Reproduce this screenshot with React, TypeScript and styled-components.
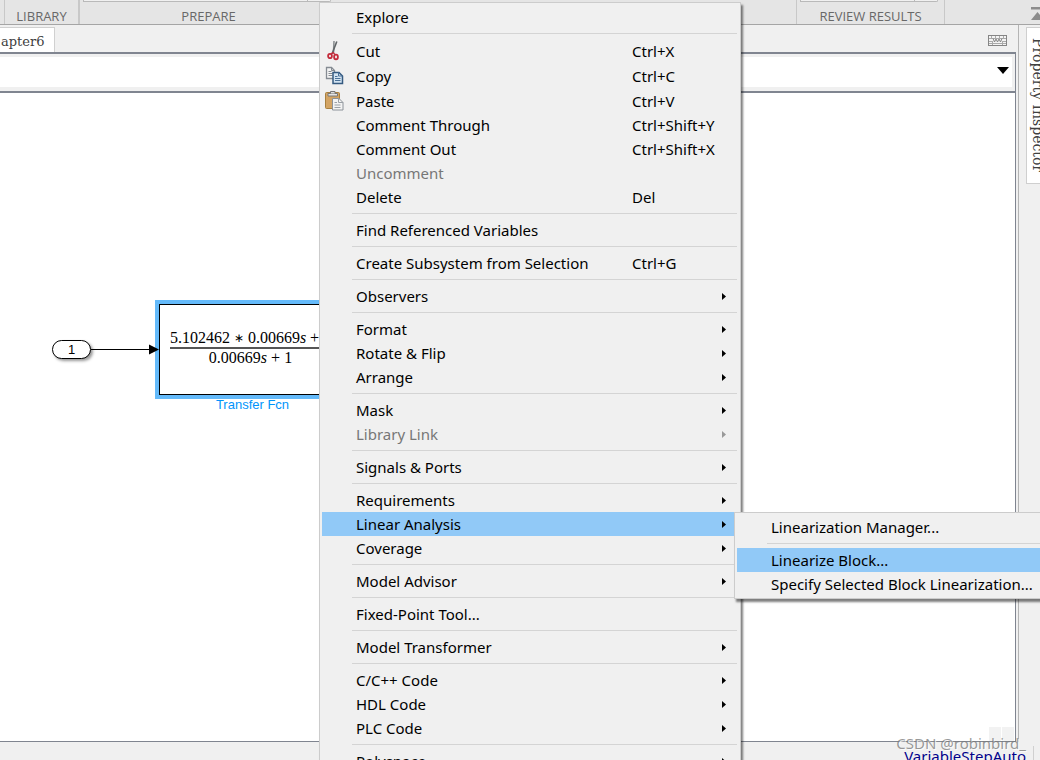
import React from 'react';
import styled, { createGlobalStyle } from 'styled-components';

const GlobalStyle = createGlobalStyle`
  *, *::before, *::after { box-sizing: border-box; }
  body {
    margin: 0;
    background: #f0f0f0;
    font-family: "Noto Sans", "Open Sans", sans-serif;
    font-size: 15px;
    color: #000;
  }
  button, select { font: inherit; color: inherit; margin: 0; }
`;

const Shell = styled.div`
  position: relative;
  display: flex;
  flex-direction: column;
  height: 100vh;
  overflow: hidden;
`;

/* Ribbon */

const Ribbon = styled.header`
  display: flex;
  flex: none;
  height: 25px;
  padding-left: 4px;
  background: #e5e5e5;
  border-bottom: 1px solid #a5a5a5;
`;

const RibbonSection = styled.section<{ $width: number; $push?: boolean; $edge?: number }>`
  display: flex;
  flex-direction: column;
  justify-content: space-between;
  align-items: center;
  width: ${(p) => p.$width}px;
  margin-left: ${(p) => (p.$push ? 'auto' : '0')};
  border-left: ${(p) => p.$edge ?? 1}px solid #c8c8c8;
`;

const GalleryEdge = styled.div`
  display: flex;
  justify-content: flex-end;
  align-self: stretch;
  height: 2px;
  margin: 0 6px 0 3px;
  background: #f0f0f0;
  border: 1px solid #b9b9b9;
  border-top: 0;
  border-radius: 0 0 3px 0;
  &::after {
    content: '';
    width: 23px;
    border-left: 1px solid #b9b9b9;
  }
`;

const RibbonTitle = styled.h2`
  margin: auto 0 0;
  font: 400 13px/16px "Open Sans", "Noto Sans", sans-serif;
  color: #686868;
`;

const RibbonEnd = styled.div`
  display: flex;
  justify-content: flex-end;
  align-items: flex-end;
  width: 96px;
  padding-bottom: 4px;
  border-left: 1px solid #c8c8c8;
`;

const IconButton = styled.button`
  display: flex;
  padding: 0;
  border: 0;
  background: none;
`;

/* Workspace */

const Workspace = styled.div`
  display: flex;
  flex: 1;
  min-height: 0;
`;

const Editor = styled.main`
  display: flex;
  flex-direction: column;
  flex: 1;
  min-width: 0;
`;

const TabRow = styled.div`
  display: flex;
  flex: none;
  justify-content: space-between;
  align-items: flex-end;
  height: 27px;
  margin-right: 2px;
  padding-right: 9px;
`;

const FileTab = styled.button`
  height: 25px;
  padding: 4px 10px 0 1px;
  border: 1px solid #d0d0d0;
  border-width: 1px 1px 0 0;
  background: #fff;
  font: 13px/20px "DejaVu Serif", serif;
  color: #404040;
`;

const KeyboardSlot = styled.div`
  display: flex;
  padding-bottom: 6px;
`;

const PathBar = styled.div`
  position: relative;
  flex: none;
  height: 39px;
  margin-right: 2px;
  padding: 1px 1px 1px 0;
  border: solid #808590;
  border-width: 2px 1px 0 0;
`;

const PathSelect = styled.select`
  display: block;
  appearance: none;
  width: 100%;
  height: 100%;
  border: 2px solid #f0f0f0;
  border-width: 2px 2px 3px 0;
  border-radius: 0;
  background: #fff;
`;

const SelectArrow = styled.svg`
  position: absolute;
  right: 6px;
  top: 13px;
  pointer-events: none;
`;

const Canvas = styled.div`
  position: relative;
  flex: 1;
  margin-right: 2px;
  overflow: hidden;
  background: #fff;
  border: solid #808590;
  border-width: 2px 1px 1px 0;
`;

const ScrollCorner = styled.div`
  position: absolute;
  right: 1px;
  bottom: 0;
  display: flex;
  gap: 1px;
  &::before, &::after {
    content: '';
    width: 12px;
    height: 14px;
    background: #f2f2f2;
  }
`;

const StatusBar = styled.footer`
  display: flex;
  justify-content: flex-end;
  align-items: flex-start;
  flex: none;
  gap: 7px;
  height: 18px;
  padding: 4px 6px 0 0;
  overflow: hidden;
  &::after {
    content: '';
    height: 14px;
    border-left: 1px solid #d0d0d0;
  }
`;

const SolverLink = styled.a`
  line-height: 20px;
  color: #00008b;
  text-decoration: none;
`;

const SideRail = styled.aside`
  flex: none;
  width: 22px;
  padding: 2px 0 0 7px;
  overflow: hidden;
  border-left: 1px solid #b4b4b4;
`;

const RailTab = styled.button`
  width: 28px;
  height: 157px;
  padding: 0 4px 0 0;
  border: 1px solid #cfcfcf;
  background: #fff;
  writing-mode: vertical-rl;
  font: 14px/22px "DejaVu Serif", serif;
  color: #404040;
`;

/* Diagram */

const InPort = styled.div`
  position: absolute;
  left: 52px;
  top: 247px;
  width: 39px;
  height: 19px;
  border: 1px solid #000;
  border-radius: 10px;
  background: #fff;
  box-shadow: 2px 2px 3px #999;
  font: 13px/17px "Liberation Sans", sans-serif;
  text-align: center;
`;

const Signal = styled.svg`
  position: absolute;
  left: 91px;
  top: 250px;
`;

const Block = styled.div`
  position: absolute;
  left: 155px;
  top: 207px;
  width: 195px;
  border: 4px solid #64bafa;
`;

const BlockBody = styled.div`
  display: flex;
  flex-direction: column;
  align-items: flex-start;
  height: 91px;
  padding: 24px 0 0 10px;
  border: 1px solid #000;
`;

const BlockName = styled.div`
  position: absolute;
  left: 155px;
  top: 304px;
  width: 195px;
  font: 13px/16px "Liberation Sans", sans-serif;
  color: #0094fb;
  text-align: center;
`;

const FractionRow = styled.div<{ $ruled?: boolean }>`
  display: flex;
  justify-content: center;
  gap: 4px;
  width: 161px;
  height: 20px;
  border-bottom: ${(p) => (p.$ruled ? '2px solid #555' : '0')};
  font: 16px/18px "Liberation Serif", serif;
  white-space: nowrap;
`;

const Times = styled.span`
  font-size: 12px;
`;

/* Context menu */

const MenuPanel = styled.div<{ $sub?: boolean }>`
  position: absolute;
  z-index: 2;
  left: ${(p) => (p.$sub ? '412px' : '319px')};
  top: ${(p) => (p.$sub ? '0' : '2px')};
  width: 422px;
  padding: 2px;
  background: #f0f0f0;
  border: 1px solid #cccccc;
  box-shadow: 2px 3px 2px rgba(0, 0, 0, 0.5);
`;

const MenuRow = styled.div`
  position: relative;
`;

const MenuItem = styled.button<{ $active?: boolean; $tall?: boolean }>`
  display: grid;
  grid-template-columns: 31px 276px 1fr 4px;
  align-items: center;
  width: 100%;
  height: ${(p) => (p.$tall ? 25 : 24)}px;
  padding: 0 12px 0 3px;
  border: 0;
  background: ${(p) => (p.$active ? '#91c9f7' : 'transparent')};
  line-height: 24px;
  text-align: left;
  white-space: nowrap;
  &:disabled { color: #777; }
`;

const ItemIcon = styled.span`
  display: flex;
`;

const Divider = styled.hr`
  height: 1px;
  margin: 4px 1px 4px 30px;
  border: 0;
  background: #d4d4d4;
`;

const Watermark = styled.div`
  position: absolute;
  z-index: 3;
  right: 14px;
  bottom: 8px;
  font: 15px/18px "Noto Sans", sans-serif;
  color: rgba(120, 120, 120, 0.75);
  text-shadow: 1px 1px 0 rgba(255, 255, 255, 0.8);
`;

const CutIcon = () => (
  <svg width="19" height="21" viewBox="0 0 19 21" fill="none" aria-hidden="true">
    <path d="M9 1 8.500 13" stroke="#8b8f92" strokeWidth="1.600" />
    <path d="M11.800 1.500 7 14" stroke="#5f6467" strokeWidth="1.600" />
    <ellipse cx="5" cy="16" rx="1.900" ry="2.200" stroke="#c42a3a" strokeWidth="1.800" />
    <ellipse cx="11" cy="17" rx="1.900" ry="2.300" stroke="#c42a3a" strokeWidth="1.800" />
    <path d="M6 14 8 12.500 10 14.500" stroke="#c42a3a" strokeWidth="1.300" />
  </svg>
);

const CopyIcon = () => (
  <svg width="19" height="19" viewBox="0 0 19 19" aria-hidden="true">
    <path d="M1.500 1.500h5l3 3v8h-8z" fill="#f4f4f4" stroke="#858b92" strokeWidth="1.300" />
    <path d="M6.500 1.500v3h3M3.500 5.500h3M3.500 7.500h4M3.500 9.500h4" fill="none" stroke="#858b92" />
    <path d="M8 6.500h6l3.500 3.500v7.500H8z" fill="#d3e4f2" stroke="#355a80" strokeWidth="1.500" />
    <path d="M13.500 6.500V10h4M10 10.500h2.500M10 12.500h5.500M10 14.500h5.500" fill="none" stroke="#4a7198" />
  </svg>
);

const PasteIcon = () => (
  <svg width="19" height="21" viewBox="0 0 19 21" aria-hidden="true">
    <rect x="0.500" y="2.500" width="14" height="16" rx="1" fill="#d3a464" stroke="#a8803f" />
    <path d="M3 3.500h9.500v2.500H3z" fill="#e4e4e4" stroke="#777" />
    <path d="M5.500 3.500v-2h4.500v2" fill="#ddd" stroke="#777" />
    <path d="M7.500 8.500h6.500l4 4v7.500H7.500z" fill="#f3f3f3" stroke="#8c9299" />
    <path d="M13.500 8.500v4H18M9.500 12.500H12M9.500 15h6M9.500 17.500h6" fill="none" stroke="#9aa0a6" />
  </svg>
);

const SubArrow = ({ dim }: { dim?: boolean }) => (
  <svg width="4" height="7" viewBox="0 0 4 7" aria-hidden="true">
    <path d="M0 0 4 3.500 0 7z" fill={dim ? '#999' : '#000'} />
  </svg>
);

type Entry = {
  label: string;
  keys?: string;
  icon?: React.ReactNode;
  more?: boolean;
  off?: boolean;
  active?: boolean;
  children?: Entry[][];
};

const subGroups: Entry[][] = [
  [{ label: 'Linearization Manager...' }],
  [{ label: 'Linearize Block...', active: true }, { label: 'Specify Selected Block Linearization...' }],
];

const groups: Entry[][] = [
  [{ label: 'Explore' }],
  [
    { label: 'Cut', keys: 'Ctrl+X', icon: <CutIcon /> },
    { label: 'Copy', keys: 'Ctrl+C', icon: <CopyIcon /> },
    { label: 'Paste', keys: 'Ctrl+V', icon: <PasteIcon /> },
    { label: 'Comment Through', keys: 'Ctrl+Shift+Y' },
    { label: 'Comment Out', keys: 'Ctrl+Shift+X' },
    { label: 'Uncomment', off: true },
    { label: 'Delete', keys: 'Del' },
  ],
  [{ label: 'Find Referenced Variables' }],
  [{ label: 'Create Subsystem from Selection', keys: 'Ctrl+G' }],
  [{ label: 'Observers', more: true }],
  [
    { label: 'Format', more: true },
    { label: 'Rotate & Flip', more: true },
    { label: 'Arrange', more: true },
  ],
  [
    { label: 'Mask', more: true },
    { label: 'Library Link', more: true, off: true },
  ],
  [{ label: 'Signals & Ports', more: true }],
  [
    { label: 'Requirements', more: true },
    { label: 'Linear Analysis', more: true, active: true, children: subGroups },
    { label: 'Coverage', more: true },
  ],
  [{ label: 'Model Advisor', more: true }],
  [{ label: 'Fixed-Point Tool...' }],
  [{ label: 'Model Transformer', more: true }],
  [
    { label: 'C/C++ Code', more: true },
    { label: 'HDL Code', more: true },
    { label: 'PLC Code', more: true },
  ],
  [{ label: 'Polyspace', more: true }],
];

const Menu = ({ items, sub, name }: { items: Entry[][]; sub?: boolean; name: string }) => (
  <MenuPanel role="menu" aria-label={name} $sub={sub}>
    {items.map((group, i) => (
      <React.Fragment key={i}>
        {i > 0 && <Divider />}
        {group.map((e) => (
          <MenuRow key={e.label} role="none">
            <MenuItem type="button" role="menuitem" disabled={e.off} $active={e.active} $tall={!!e.icon}>
              <ItemIcon>{e.icon}</ItemIcon>
              <span>{e.label}</span>
              <span>{e.keys}</span>
              {e.more && <SubArrow dim={e.off} />}
            </MenuItem>
            {e.children && <Menu items={e.children} name={e.label} sub />}
          </MenuRow>
        ))}
      </React.Fragment>
    ))}
  </MenuPanel>
);

export default function App() {
  return (
    <Shell>
      <GlobalStyle />
      <Ribbon>
        <RibbonSection $width={74}>
          <RibbonTitle>LIBRARY</RibbonTitle>
        </RibbonSection>
        <RibbonSection $width={259} $edge={2}>
          <GalleryEdge />
          <RibbonTitle>PREPARE</RibbonTitle>
        </RibbonSection>
        <RibbonSection $width={148} $push>
          <GalleryEdge />
          <RibbonTitle>REVIEW RESULTS</RibbonTitle>
        </RibbonSection>
        <RibbonEnd>
          <IconButton type="button" aria-label="Minimize toolstrip">
            <svg width="9" height="13" viewBox="0 0 9 13" aria-hidden="true">
              <path d="M0 0h9v2.500H0zM0 13l6.500-8L9 8v5z" fill="#8c8c8c" />
            </svg>
          </IconButton>
        </RibbonEnd>
      </Ribbon>

      <Workspace>
        <Editor>
          <TabRow>
            <FileTab type="button">apter6</FileTab>
            <KeyboardSlot>
              <IconButton type="button" aria-label="Keyboard shortcuts">
                <svg width="19" height="11" viewBox="0 0 19 11" fill="none" stroke="#999" aria-hidden="true">
                  <rect x="0.500" y="0.500" width="18" height="10" fill="#f4f4f4" stroke="#858585" />
                  <path d="M1 3.500h17M1 6.500h4M14 6.500h4M1 8.500h17" stroke="#aaa" />
                  <path d="M3.500 1v2M7.500 1v2M11.500 1v2M15.500 1v2M4.500 7v3M14.500 7v3" stroke="#aaa" />
                  <path d="M5 3.500 6.500 7 8 4l1.500 3L11 4l1.500 3L14 3.500" stroke="#858585" />
                </svg>
              </IconButton>
            </KeyboardSlot>
          </TabRow>
          <PathBar>
            <PathSelect aria-label="Model path" />
            <SelectArrow width="12" height="7" viewBox="0 0 12 7" aria-hidden="true">
              <path d="M0 0h12L6 7z" fill="#000" />
            </SelectArrow>
          </PathBar>
          <Canvas>
            <InPort>1</InPort>
            <Block>
              <BlockBody>
                <FractionRow $ruled>
                  <span>5.102462</span>
                  <Times>∗</Times>
                  <span>0.00669<i>s</i></span>
                  <span>+</span>
                  <span>1</span>
                </FractionRow>
                <FractionRow>
                  <span>0.00669<i>s</i></span>
                  <span>+</span>
                  <span>1</span>
                </FractionRow>
              </BlockBody>
            </Block>
            <Signal width="69" height="12" viewBox="0 0 69 12" aria-hidden="true">
              <path d="M0 6.500h60" stroke="#000" />
              <path d="M58 1.500 68 6.500 58 11.500z" fill="#000" />
            </Signal>
            <BlockName>Transfer Fcn</BlockName>
            <ScrollCorner />
          </Canvas>
        </Editor>
        <SideRail>
          <RailTab type="button">Property Inspector</RailTab>
        </SideRail>
      </Workspace>
      <StatusBar>
        <SolverLink href="#solver">VariableStepAuto</SolverLink>
      </StatusBar>

      <Menu items={groups} name="Block actions" />
      <Watermark>CSDN @robinbird_</Watermark>
    </Shell>
  );
}
